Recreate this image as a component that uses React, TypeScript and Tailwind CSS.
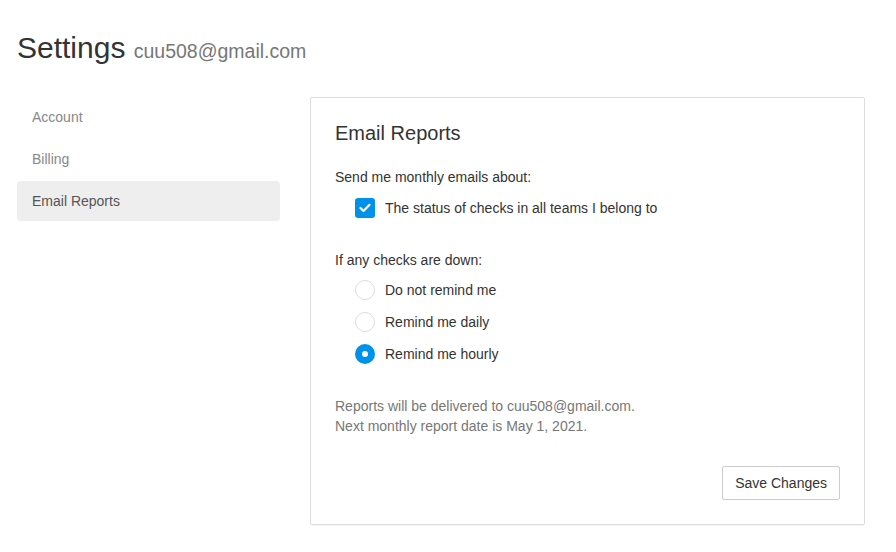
import React, { useState } from 'react';

const navItems = ["Account", "Billing", "Email Reports"];

const reminderOptions = [
  { id: "none", label: "Do not remind me" },
  { id: "daily", label: "Remind me daily" },
  { id: "hourly", label: "Remind me hourly" },
];

const App = () => {
  const [active, setActive] = useState("Email Reports");
  const [monthly, setMonthly] = useState(true);
  const [reminder, setReminder] = useState("hourly");

  return (
    <div className="min-h-screen bg-white px-[17px] pt-[31px] text-[14px] leading-[20px] text-[#333] font-['Liberation_Sans',Arial,sans-serif]">
      <h1 className="text-[30px] leading-[33px] font-normal text-[#333]">
        Settings <span className="text-[19.5px] text-[#777]">cuu508@gmail.com</span>
      </h1>

      <div className="mt-[29px] flex gap-[30px]">
        {/* Sidebar */}
        <ul className="w-[263px] flex flex-col gap-[2px]">
          {navItems.map((item) => (
            <li key={item}>
              <button
                onClick={() => setActive(item)}
                className={
                  active === item
                    ? "w-full text-left px-[15px] py-[10px] rounded-[4px] bg-[#eee] text-[#555]"
                    : "w-full text-left px-[15px] py-[10px] rounded-[4px] text-[#888]"
                }
              >
                {item}
              </button>
            </li>
          ))}
        </ul>

        {/* Email reports panel */}
        <div className="w-[555px] border border-[#ddd] rounded-[2px] shadow-[0_1px_1px_rgba(0,0,0,0.05)] px-[24px] pt-[24px] pb-[24px]">
          <h2 className="text-[20px] leading-[22px] text-[#333]">Email Reports</h2>

          <p className="mt-[23px]">Send me monthly emails about:</p>
          <label className="mt-[11px] ml-[20px] flex items-center gap-[10px] cursor-pointer">
            <span
              onClick={() => setMonthly(!monthly)}
              className={
                monthly
                  ? "w-[20px] h-[20px] rounded-[3px] bg-[#0091ea] flex items-center justify-center"
                  : "w-[20px] h-[20px] rounded-[3px] border border-[#ddd] bg-white flex items-center justify-center"
              }
            >
              {monthly && (
                <svg width="12" height="10" viewBox="0 0 12 10" fill="none">
                  <polyline points="1.5,5 4.5,8 10.5,1.8" stroke="white" strokeWidth="2.2" strokeLinecap="round" strokeLinejoin="round" />
                </svg>
              )}
            </span>
            <span>The status of checks in all teams I belong to</span>
          </label>

          <p className="mt-[32px]">If any checks are down:</p>
          <div className="mt-[10px] ml-[20px] flex flex-col gap-[12px]">
            {reminderOptions.map((opt) => (
              <label key={opt.id} className="flex items-center gap-[10px] cursor-pointer" onClick={() => setReminder(opt.id)}>
                <span
                  className={
                    reminder === opt.id
                      ? "w-[20px] h-[20px] rounded-full bg-[#0091ea] flex items-center justify-center"
                      : "w-[20px] h-[20px] rounded-full border border-[#ddd] bg-white"
                  }
                >
                  {reminder === opt.id && <span className="w-[6px] h-[6px] rounded-full bg-white" />}
                </span>
                <span>{opt.label}</span>
              </label>
            ))}
          </div>

          <p className="mt-[32px] text-[#777]">
            Reports will be delivered to cuu508@gmail.com.
            <br />
            Next monthly report date is May 1, 2021.
          </p>

          <div className="mt-[30px] flex justify-end">
            <button className="px-[12px] py-[6px] border border-[#ccc] rounded-[2px] bg-white text-[#333]">
              Save Changes
            </button>
          </div>
        </div>
      </div>
    </div>
  );
};

export default App;
